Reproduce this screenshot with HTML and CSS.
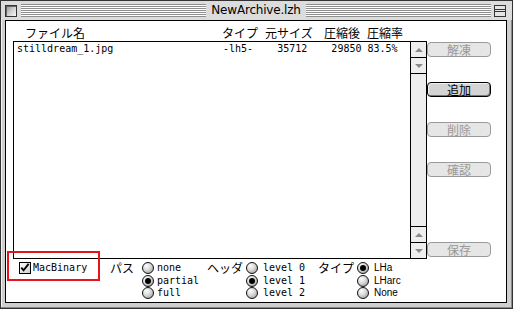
FILE: index.html
```html
<!DOCTYPE html>
<html lang="ja">
<head>
<meta charset="utf-8">
<title>NewArchive.lzh</title>
<link rel="stylesheet" href="styles.css">
</head>
<body>
<div class="window">
  <div class="titlebar">
    <div class="closebox"></div>
    <div class="stripes"></div>
    <div class="title">NewArchive.lzh</div>
    <div class="stripes"></div>
    <div class="shadebox">
      <svg width="12" height="12" viewBox="0 0 12 12"><rect x="0.5" y="0.5" width="11" height="11" fill="#e4e4e4" stroke="#333"/><line x1="1" y1="4.5" x2="11" y2="4.5" stroke="#333"/><line x1="1" y1="6.5" x2="11" y2="6.5" stroke="#333"/></svg>
    </div>
  </div>
  <div class="content">
    <div class="header">
      <span class="h-name">ファイル名</span><span class="h-type">タイプ</span><span class="h-size">元サイズ</span><span class="h-comp">圧縮後</span><span class="h-rate">圧縮率</span>
    </div>
    <div class="main">
      <div class="list">
        <div class="files">
          <div class="row"><span class="f-name">stilldream_1.jpg</span><span class="f-data">-lh5-    35712    29850 83.5%</span></div>
        </div>
        <div class="scrollbar">
          <div class="arrow up top"></div>
          <div class="arrow down top"></div>
          <div class="track"></div>
          <div class="arrow up bottom"></div>
          <div class="arrow down bottom"></div>
        </div>
      </div>
      <div class="buttons">
        <div class="btn disabled">解凍</div>
        <div class="btn default">追加</div>
        <div class="btn disabled">削除</div>
        <div class="btn disabled">確認</div>
        <div class="btn disabled save">保存</div>
      </div>
    </div>
    <div class="options">
      <div class="check">
        <span class="checkbox"><svg width="12" height="12" viewBox="0 0 12 12"><path d="M2.5 5.5 L5 8.5 L10.5 1.5" fill="none" stroke="#000" stroke-width="2"/></svg></span>
        <span class="mono">MacBinary</span>
      </div>
      <div class="group g-path">
        <span class="glabel">パス</span>
        <div class="radios">
          <div class="ritem"><span class="radio"></span><span class="mono">none</span></div>
          <div class="ritem"><span class="radio on"></span><span class="mono">partial</span></div>
          <div class="ritem"><span class="radio"></span><span class="mono">full</span></div>
        </div>
      </div>
      <div class="group g-head">
        <span class="glabel">ヘッダ</span>
        <div class="radios">
          <div class="ritem"><span class="radio"></span><span class="mono">level 0</span></div>
          <div class="ritem"><span class="radio on"></span><span class="mono">level 1</span></div>
          <div class="ritem"><span class="radio"></span><span class="mono">level 2</span></div>
        </div>
      </div>
      <div class="group g-type">
        <span class="glabel">タイプ</span>
        <div class="radios">
          <div class="ritem"><span class="radio on"></span><span class="sans">LHa</span></div>
          <div class="ritem"><span class="radio"></span><span class="sans">LHarc</span></div>
          <div class="ritem"><span class="radio"></span><span class="sans">None</span></div>
        </div>
      </div>
    </div>
  </div>
  <div class="highlight"></div>
</div>
</body>
</html>
```

FILE: styles.css
```css
* { box-sizing: border-box; }
html, body { margin: 0; padding: 0; background: #fff; }
body { width: 513px; height: 309px; overflow: hidden; font-family: "Noto Sans CJK JP", "DejaVu Sans", sans-serif; }

.window {
  position: relative;
  width: 513px;
  height: 309px;
  border: 1px solid #333;
  background: #cfcfcf;
  padding: 0 5px 5px 4px;
  display: flex;
  flex-direction: column;
  box-shadow: inset -1px -1px 0 #888, inset 1px 1px 0 #f4f4f4;
}

.titlebar {
  height: 19px;
  display: flex;
  align-items: center;
  padding: 0 1px 0 0;
  background: #dcdcdc;
  margin: 0 -5px 0 -4px;
  padding-left: 4px;
  padding-right: 6px;
}
.closebox {
  width: 12px;
  height: 12px;
  border: 1px solid #333;
  background: linear-gradient(135deg, #8a8a8a 0%, #c8c8c8 45%, #fafafa 100%);
  box-shadow: inset 1px 1px 0 #666;
  margin-right: 4px;
  flex: none;
}
.stripes {
  flex: 1;
  height: 13px;
  background: repeating-linear-gradient(to bottom, #8e8e8e 0 1px, #ffffff 1px 2px);
}
.title {
  padding: 0 5px;
  font-family: "DejaVu Sans", "Liberation Sans", sans-serif;
  font-size: 12px;
  line-height: 19px;
  color: #000;
  letter-spacing: -0.2px;
}
.shadebox { width: 12px; height: 12px; margin-left: 3px; flex: none; display: flex; }

.content {
  flex: 1;
  background: #fff;
  border: 1px solid #000;
  padding: 3px 0 0 7px;
  display: flex;
  flex-direction: column;
}

.header {
  height: 17px;
  display: flex;
  align-items: center;
  font-size: 12px;
  line-height: 17px;
  color: #000;
  padding-left: 12px;
}
.header span { white-space: nowrap; }
.h-name { width: 197px; }
.h-type { width: 43px; }
.h-size { width: 59px; }
.h-comp { width: 43px; }

.main { display: flex; height: 218px; }
.list {
  width: 414px;
  height: 218px;
  border: 1px solid #000;
  display: flex;
}
.files { flex: 1; padding: 0 0 0 3px; }
.row {
  height: 13px;
  display: flex;
  align-items: center;
  font-family: "DejaVu Sans Mono", "Liberation Mono", monospace;
  font-size: 10px;
  line-height: 13px;
  white-space: pre;
}
.f-name { width: 206px; }

.scrollbar {
  width: 16px;
  border-left: 1px solid #000;
  background: #eeeeee;
  display: flex;
  flex-direction: column;
}
.arrow {
  height: 16px;
  display: flex;
  align-items: center;
  justify-content: center;
  background: #eeeeee;
}
.arrow.top { border-bottom: 1px solid #000; }
.arrow.bottom { border-top: 1px solid #000; }
.arrow.up::before {
  content: "";
  border-left: 4px solid transparent;
  border-right: 4px solid transparent;
  border-bottom: 4px solid #8a8a8a;
}
.arrow.down::before {
  content: "";
  border-left: 4px solid transparent;
  border-right: 4px solid transparent;
  border-top: 4px solid #8a8a8a;
}
.track { flex: 1; }

.buttons {
  width: 64px;
  display: flex;
  flex-direction: column;
  gap: 25px;
  padding: 1px 0 2px 0;
}
.btn {
  height: 15px;
  border-radius: 4px;
  font-size: 12px;
  line-height: 13px;
  text-align: center;
  flex: none;
}
.btn.disabled {
  border: 1px solid #9a9a9a;
  background: #e6e6e6;
  color: #999;
}
.btn.default {
  border: 1px solid #000;
  background: #d4d4d4;
  color: #000;
  box-shadow: inset 1px 1px 0 #f2f2f2, inset -1px -1px 0 #7a7a7a;
}
.btn.save { margin-top: auto; }

.options {
  display: flex;
  align-items: flex-start;
  padding: 3px 0 0 6px;
}
.check {
  width: 91px;
  height: 12px;
  display: flex;
  align-items: center;
  gap: 2px;
}
.checkbox {
  width: 12px;
  height: 12px;
  border: 1px solid #000;
  background: linear-gradient(135deg, #ffffff, #cfcfcf);
  display: flex;
  flex: none;
}
.checkbox svg { margin: -1px 0 0 -1px; }
.mono {
  font-family: "DejaVu Sans Mono", "Liberation Mono", monospace;
  font-size: 10px;
  line-height: 12px;
  white-space: pre;
}
.sans {
  font-family: "Liberation Sans", "DejaVu Sans", sans-serif;
  font-size: 10px;
  line-height: 12px;
}
.group { display: flex; align-items: flex-start; }
.glabel { font-size: 12px; line-height: 12px; white-space: nowrap; }
.g-path .glabel { width: 32px; }
.g-path .radios { width: 65px; }
.g-head .glabel { width: 39px; }
.g-head .radios { width: 72px; }
.g-type .glabel { width: 39px; }
.radios { display: flex; flex-direction: column; }
.ritem { height: 12.5px; display: flex; align-items: center; gap: 3px; }
.g-head .ritem, .g-type .ritem { gap: 5px; }
.radio {
  width: 12px;
  height: 12px;
  border-radius: 50%;
  border: 1px solid #111;
  background: radial-gradient(circle at 35% 30%, #ffffff 0%, #d8d8d8 45%, #8c8c8c 100%);
  display: flex;
  align-items: center;
  justify-content: center;
  flex: none;
}
.radio.on::after {
  content: "";
  width: 6px;
  height: 6px;
  border-radius: 50%;
  background: #000;
}

.highlight {
  position: absolute;
  left: 6px;
  top: 250px;
  width: 93px;
  height: 30px;
  border: 2px solid #e8141c;
}
```
